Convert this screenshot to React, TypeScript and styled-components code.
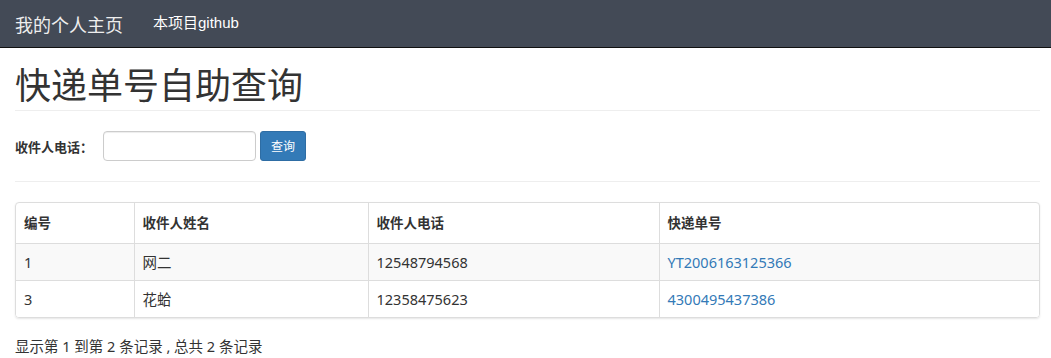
import React from "react";
import styled, { createGlobalStyle } from "styled-components";

const GlobalStyle = createGlobalStyle`
  body {
    margin: 0;
    font-family: "Liberation Sans", "Noto Sans CJK SC", sans-serif;
    font-size: 14px;
    color: #333;
    background: #fff;
  }
`;

const rows = [
  { id: "1", name: "网二", phone: "12548794568", no: "YT2006163125366" },
  { id: "3", name: "花蛤", phone: "12358475623", no: "4300495437386" },
];

const App = () => {
  return (
    <>
      <GlobalStyle />
      <Navbar>
        <Brand>我的个人主页</Brand>
        <NavLink>本项目github</NavLink>
      </Navbar>
      <Container>
        <PageHeader>快递单号自助查询</PageHeader>
        <Form>
          <Label>收件人电话：</Label>
          <Input type="text" />
          <Button>查询</Button>
        </Form>
        <Rule />
        <TableWrap>
          <Table>
            <colgroup>
              <col style={{ width: 118 }} />
              <col style={{ width: 234 }} />
              <col style={{ width: 291 }} />
              <col />
            </colgroup>
            <thead>
              <tr>
                <Th>编号</Th>
                <Th>收件人姓名</Th>
                <Th>收件人电话</Th>
                <Th>快递单号</Th>
              </tr>
            </thead>
            <tbody>
              {rows.map((r, i) => (
                <Tr key={r.id} striped={i % 2 === 0}>
                  <Td>{r.id}</Td>
                  <Td>{r.name}</Td>
                  <Td>{r.phone}</Td>
                  <Td>
                    <Link>{r.no}</Link>
                  </Td>
                </Tr>
              ))}
            </tbody>
          </Table>
        </TableWrap>
        <Footer>显示第 1 到第 2 条记录 , 总共 2 条记录</Footer>
      </Container>
    </>
  );
};

export default App;

const Navbar = styled.div`
  height: 47px;
  background-color: #434a56;
  border-bottom: 1px solid #111;
  display: flex;
  align-items: center;
`;

const Brand = styled.div`
  padding: 0 15px;
  font-family: "Noto Sans CJK SC", sans-serif;
  font-size: 18px;
  line-height: 20px;
  color: #eee;
`;

const NavLink = styled.div`
  padding: 0 15px;
  font-family: "Liberation Sans", "Noto Sans CJK SC", sans-serif;
  font-size: 15px;
  line-height: 20px;
  color: #fff;
  margin-top: -2px;
`;

const Container = styled.div`
  padding: 0 11px 0 15px;
`;

const PageHeader = styled.h1`
  margin: 15px 0 20px;
  padding-bottom: 7px;
  border-bottom: 1px solid #eee;
  font-family: "Noto Sans CJK SC", sans-serif;
  font-size: 36px;
  font-weight: 400;
  line-height: 40px;
  color: #333;
`;

const Form = styled.div`
  display: flex;
  align-items: center;
`;

const Label = styled.label`
  font-family: "Noto Sans CJK SC", sans-serif;
  font-weight: 700;
  font-size: 13px;
  margin-right: 10px;
`;

const Input = styled.input`
  box-sizing: border-box;
  width: 153px;
  height: 30px;
  padding: 5px 10px;
  border: 1px solid #ccc;
  border-radius: 4px;
  box-shadow: inset 0 1px 1px rgba(0, 0, 0, 0.075);
  font-size: 12px;
  outline: none;
`;

const Button = styled.button`
  box-sizing: border-box;
  margin-left: 4px;
  width: 46px;
  height: 30px;
  padding: 0;
  border: 1px solid #2e6da4;
  border-radius: 3px;
  background-color: #337ab7;
  color: #fff;
  font-family: "Noto Sans CJK SC", sans-serif;
  font-size: 12px;
  line-height: 1.5;
`;

const Rule = styled.hr`
  margin: 20px 0;
  border: 0;
  border-top: 1px solid #eee;
`;

const TableWrap = styled.div`
  border: 1px solid #ddd;
  border-radius: 4px;
  box-shadow: 0 1px 2px rgba(0, 0, 0, 0.1);
  overflow: hidden;
`;

const Table = styled.table`
  width: 100%;
  border-collapse: collapse;
  table-layout: fixed;
  font-family: "Noto Sans", "Noto Sans CJK SC", sans-serif;
  font-size: 14.5px;
`;

const Th = styled.th`
  text-align: left;
  font-weight: 700;
  padding: 10px 8px;
  line-height: 20px;
  font-size: 13.5px;
  border-left: 1px solid #ddd;
  border-bottom: 1px solid #ddd;
  &:first-child {
    border-left: 0;
  }
`;

const Tr = styled.tr<{ striped: boolean }>`
  background-color: ${({ striped }) => (striped ? "#f9f9f9" : "#fff")};
  &:last-child td {
    border-bottom: 0;
  }
`;

const Td = styled.td`
  padding: 8px;
  line-height: 20px;
  border-left: 1px solid #ddd;
  border-bottom: 1px solid #ddd;
  &:first-child {
    border-left: 0;
  }
`;

const Link = styled.span`
  color: #337ab7;
`;

const Footer = styled.div`
  margin-top: 18px;
  font-family: "Noto Sans", "Noto Sans CJK SC", sans-serif;
  font-size: 14.5px;
  line-height: 20px;
`;
